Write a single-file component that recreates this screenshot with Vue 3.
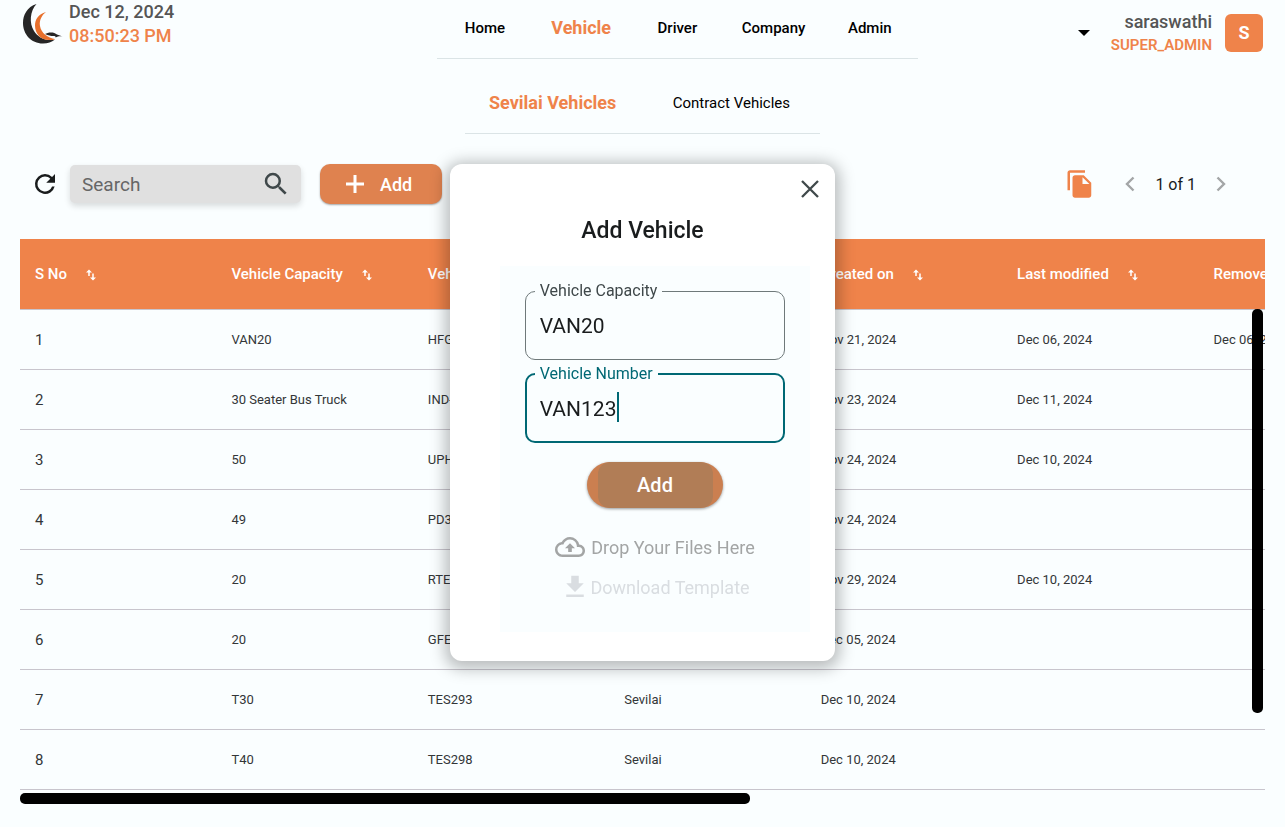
<script setup>
import { ref } from 'vue'

const nav = ['Home', 'Vehicle', 'Driver', 'Company', 'Admin']
const columns = [
  'S No',
  'Vehicle Capacity',
  'Vehicle Number',
  'Company',
  'Created on',
  'Last modified',
  'Removed on',
]
const rows = [
  ['VAN20', 'HFG', '', 'Nov 21, 2024', 'Dec 06, 2024', 'Dec 06, 2024'],
  ['30 Seater Bus Truck', 'IND-', '', 'Nov 23, 2024', 'Dec 11, 2024', ''],
  ['50', 'UPH', '', 'Nov 24, 2024', 'Dec 10, 2024', ''],
  ['49', 'PD3', '', 'Nov 24, 2024', '', ''],
  ['20', 'RTE', '', 'Nov 29, 2024', 'Dec 10, 2024', ''],
  ['20', 'GFE', '', 'Dec 05, 2024', '', ''],
  ['T30', 'TES293', 'Sevilai', 'Dec 10, 2024', '', ''],
  ['T40', 'TES298', 'Sevilai', 'Dec 10, 2024', '', ''],
]
const search = ref('')
const capacity = ref('VAN20')
const number = ref('VAN123')
</script>

<template>
  <div class="page">
    <header class="top">
      <div class="brand">
        <svg class="logo" width="40" height="40" viewBox="0 0 40 40" aria-hidden="true">
          <path d="M13.500 0C4 3 0 11 0 19c0 11 8 20.500 20 20.500 5 0 8.500-1.500 12-4C24 37.500 15 34 11 27 6 19 7 7 13.500 0z" fill="#262626" />
          <path d="M23 8C15 10 12 16 12 21.500 12 30 18 36 26 36c3 0 5 0 6-1C25 34 18 29 17 22c-1-6 2-11 6-14z" fill="#e8702c" />
          <path d="M22 30c3-2 9-2.500 12 .5l5.500 2c-3-.5-4.500 0-7 1 .5-1-.5-1.500-2-1.500-3 0-5-.5-8.500-2z" fill="#262626" />
        </svg>
        <div class="clock">
          <span class="date">Dec 12, 2024</span>
          <span class="time">08:50:23 PM</span>
        </div>
      </div>
      <nav class="nav">
        <a v-for="item in nav" :key="item" href="#" :class="{ active: item === 'Vehicle' }">{{ item }}</a>
      </nav>
      <div class="account">
        <button class="plain" type="button" aria-label="Account menu">
          <svg width="12" height="6" viewBox="0 0 12 6"><path d="M0 0h12L6 6z" fill="#000" /></svg>
        </button>
        <div class="who">
          <span class="name">saraswathi</span>
          <span class="role">SUPER_ADMIN</span>
        </div>
        <span class="avatar">S</span>
      </div>
    </header>

    <nav class="tabs">
      <a href="#" class="active">Sevilai Vehicles</a>
      <a href="#">Contract Vehicles</a>
    </nav>

    <main class="content">
      <div class="toolbar">
        <button class="plain" type="button" aria-label="Refresh">
          <svg width="30" height="30" viewBox="0 0 24 24"><path fill="#191c1d" d="M17.650 6.350A7.960 7.960 0 0 0 12 4a8 8 0 1 0 7.730 10h-2.080A6 6 0 1 1 12 6c1.660 0 3.140.690 4.220 1.780L13 11h7V4z" /></svg>
        </button>
        <div class="search">
          <input v-model="search" type="text" placeholder="Search" aria-label="Search" />
          <svg width="30" height="30" viewBox="0 0 24 24" aria-hidden="true"><path fill="#3f484a" d="M15.500 14h-.790l-.280-.270A6.470 6.470 0 0 0 16 9.500 6.500 6.500 0 1 0 9.500 16c1.610 0 3.090-.590 4.230-1.570l.270.280v.790l5 4.990L20.490 19zm-6 0a4.500 4.500 0 1 1 0-9 4.500 4.500 0 0 1 0 9z" /></svg>
        </div>
        <button class="add" type="button">
          <svg width="18" height="18" viewBox="0 0 18 18" aria-hidden="true"><path d="M9 0v18M0 9h18" stroke="#fff" stroke-width="3" /></svg>
          Add
        </button>
        <div class="pager">
          <button class="plain copy" type="button" aria-label="Copy">
            <svg width="30" height="30" viewBox="0 0 24 24"><path fill="#ef834a" d="M16 1H4c-1.100 0-2 .900-2 2v14h2V3h12zm-1 4l6 6v10c0 1.100-.900 2-2 2H7.990C6.890 23 6 22.100 6 21l.010-14c0-1.100.890-2 1.990-2zm-1 7h5.500L14 6.500z" /></svg>
          </button>
          <button class="plain" type="button" aria-label="Previous page">
            <svg width="10" height="16" viewBox="0 0 10 16"><path d="M8.500 1.500L2 8l6.500 6.500" fill="none" stroke="#a3a6a7" stroke-width="2.400" /></svg>
          </button>
          <span class="count">1 of 1</span>
          <button class="plain" type="button" aria-label="Next page">
            <svg width="10" height="16" viewBox="0 0 10 16"><path d="M1.500 1.500L8 8l-6.500 6.500" fill="none" stroke="#a3a6a7" stroke-width="2.400" /></svg>
          </button>
        </div>
      </div>

      <div class="table-area">
        <div class="viewport">
          <table>
            <thead>
              <tr>
                <th v-for="col in columns" :key="col" scope="col">
                  {{ col }}
                  <svg width="10" height="12" viewBox="0 0 10 12" aria-hidden="true">
                    <path d="M3 7V2M7 4.500V10" stroke="#fff" stroke-width="1.500" fill="none" />
                    <path d="M0 3.500L3 .5l3 3zM4 8.500l3 3 3-3z" fill="#fff" />
                  </svg>
                </th>
              </tr>
            </thead>
            <tbody>
              <tr v-for="(row, i) in rows" :key="i">
                <td class="index">{{ i + 1 }}</td>
                <td v-for="(cell, j) in row" :key="j">{{ cell }}</td>
              </tr>
            </tbody>
          </table>
        </div>
        <div class="bar-y"></div>
        <div class="bar-x"></div>
      </div>
    </main>

    <div class="overlay">
      <form class="dialog" role="dialog" aria-labelledby="dialog-title" @submit.prevent>
        <button class="plain close" type="button" aria-label="Close">
          <svg width="18" height="18" viewBox="0 0 18 18"><path d="M1 1l16 16M17 1L1 17" stroke="#3f484a" stroke-width="2.300" /></svg>
        </button>
        <h2 id="dialog-title">Add Vehicle</h2>
        <div class="panel">
          <fieldset class="field">
            <legend><label for="capacity">Vehicle Capacity</label></legend>
            <input id="capacity" v-model="capacity" type="text" />
          </fieldset>
          <fieldset class="field focused">
            <legend><label for="number">Vehicle Number</label></legend>
            <div class="entry">
              <input id="number" v-model="number" type="text" />
              <span class="caret"></span>
            </div>
          </fieldset>
          <button class="submit" type="submit"><span>Add</span></button>
          <button class="plain file drop" type="button">
            <svg width="30" height="30" viewBox="0 0 24 24" aria-hidden="true"><path fill="#a3a5a5" d="M19.350 10.040A7.490 7.490 0 0 0 12 4C9.110 4 6.600 5.640 5.350 8.040A5.994 5.994 0 0 0 0 14c0 3.310 2.690 6 6 6h13c2.760 0 5-2.240 5-5 0-2.640-2.050-4.780-4.650-4.960zM19 18H6c-2.210 0-4-1.790-4-4s1.790-4 4-4h.710C7.370 7.690 9.480 6 12 6c3.040 0 5.500 2.460 5.500 5.500v.500H19c1.660 0 3 1.340 3 3s-1.340 3-3 3zM8 13h2.550v3h2.900v-3H16l-4-4z" /></svg>
            Drop Your Files Here
          </button>
          <button class="plain file download" type="button" disabled>
            <svg width="30" height="30" viewBox="0 0 24 24" aria-hidden="true"><path fill="#d9dde1" d="M19 9h-4V3H9v6H5l7 7zM5 18v2h14v-2z" /></svg>
            Download Template
          </button>
        </div>
      </form>
    </div>
  </div>
</template>

<style>
body {
  background: #fafdfd;
}
</style>

<style scoped>
.page {
  min-height: 100vh;
  box-sizing: border-box;
  overflow: hidden;
  font-family: Roboto, "Liberation Sans", sans-serif;
  color: #191c1d;
  background: #fafeff;
}
button,
input {
  font-family: inherit;
  color: inherit;
}
a {
  color: #000;
  text-decoration: none;
}
svg {
  display: block;
  flex: none;
}
.plain {
  display: flex;
  align-items: center;
  padding: 0;
  border: 0;
  background: none;
}
.top {
  display: grid;
  grid-template-columns: 34% 481px 1fr;
  height: 59px;
}
.brand {
  display: flex;
  gap: 6px;
  padding-left: 23px;
}
.logo {
  margin-top: 4px;
}
.clock {
  display: flex;
  flex-direction: column;
  font-size: 18px;
  line-height: 24px;
  font-weight: 500;
}
.date,
.name {
  color: #555;
}
.time,
.role {
  color: #ef834a;
}
.nav {
  display: grid;
  grid-template-columns: repeat(5, 1fr);
  align-items: center;
  justify-items: center;
  padding-bottom: 3px;
  border-bottom: 1px solid #dbe4e6;
  font-size: 15px;
  font-weight: 500;
}
.nav .active,
.tabs .active {
  color: #ef834a;
  font-size: 18px;
  font-weight: 700;
}
.account {
  display: flex;
  justify-content: flex-end;
  align-items: center;
  gap: 13px;
  padding: 0 22px 0 0;
  margin-bottom: -6px;
}
.account .plain {
  margin-right: 8px;
}
.who {
  display: flex;
  flex-direction: column;
  align-items: flex-end;
  font-weight: 500;
}
.name {
  font-size: 18px;
  line-height: 24px;
}
.role {
  font-size: 15px;
  font-weight: 600;
  line-height: 22px;
}
.avatar {
  display: grid;
  place-items: center;
  width: 38px;
  height: 38px;
  border-radius: 6px;
  background: #ef834a;
  color: #fff;
  font-size: 18px;
  font-weight: 700;
}
.tabs {
  display: flex;
  justify-content: space-between;
  align-items: center;
  width: 355px;
  height: 75px;
  box-sizing: border-box;
  margin: 0 auto;
  padding: 13px 30px 0 24px;
  border-bottom: 1px solid #dbe4e6;
  font-size: 15px;
}
.content {
  padding: 30px 20px 0;
}
.toolbar {
  display: flex;
  align-items: center;
  height: 40px;
  margin-bottom: 35px;
  padding-left: 10px;
}
.search {
  display: flex;
  align-items: center;
  width: 231px;
  height: 38px;
  margin: 0 19px 0 10px;
  padding: 0 10px 0 12px;
  box-sizing: border-box;
  border-radius: 5px;
  background: #e0e0e0;
  box-shadow: 0 3px 6px rgba(0, 0, 0, 0.14);
}
.search input {
  flex: 1;
  min-width: 0;
  padding: 0;
  border: 0;
  outline: 0;
  background: none;
  font-size: 19px;
}
.search input::placeholder {
  color: #666;
}
.add {
  display: flex;
  align-items: center;
  gap: 16px;
  width: 122px;
  height: 40px;
  padding: 0 0 0 26px;
  border: 0;
  border-radius: 10px;
  background: #df824f;
  box-shadow: 0 1px 2px rgba(0, 0, 0, 0.35);
  color: #fff;
  font-size: 18px;
  font-weight: 500;
}
.pager {
  display: flex;
  align-items: center;
  gap: 20px;
  margin-left: auto;
  padding-right: 39px;
}
.copy {
  margin-right: 10px;
}
.count {
  font-size: 16px;
}
.table-area {
  position: relative;
  padding-bottom: 14px;
}
.viewport {
  overflow: hidden;
}
table {
  width: 100%;
  min-width: 1375px;
  table-layout: fixed;
  border-collapse: separate;
  border-spacing: 0;
}
th,
td {
  box-sizing: border-box;
  padding: 0 0 0 15px;
  border-bottom: 1px solid #c8c5cd;
  text-align: left;
  white-space: nowrap;
}
th {
  height: 71px;
  background: #ef834a;
  background-clip: padding-box;
  color: #fff;
  font-size: 15px;
  font-weight: 500;
}
th svg {
  display: inline-block;
  margin-left: 15px;
  vertical-align: -2px;
}
td {
  height: 60px;
  font-size: 13px;
  color: #333638;
}
td.index {
  font-size: 15px;
}
.bar-y {
  position: absolute;
  top: 70px;
  right: 2px;
  width: 11px;
  height: 404px;
  border-radius: 5px;
  background: #000;
}
.bar-x {
  position: absolute;
  left: 0;
  bottom: 0;
  width: 730px;
  height: 11px;
  border-radius: 5px;
  background: #000;
}
.overlay {
  position: fixed;
  inset: 0;
  display: flex;
  align-items: center;
  justify-content: center;
  padding-bottom: 2px;
}
.dialog {
  display: flex;
  flex-direction: column;
  width: 30%;
  min-width: 385px;
  min-height: 497px;
  box-sizing: border-box;
  padding: 16px 25px 29px 50px;
  border-radius: 12px;
  background: #fff;
  box-shadow: 0 3px 15px 5px rgba(0, 0, 0, 0.26);
}
.close {
  align-self: flex-end;
  margin-right: -9px;
}
h2 {
  margin: 18px 25px 20px 0;
  text-align: center;
  font-size: 23px;
  line-height: 30px;
  font-weight: 500;
}
.panel {
  flex: 1;
  display: flex;
  flex-direction: column;
  align-items: center;
  padding: 15px 25px 0;
  background: #fafeff;
}
.field {
  width: 100%;
  height: 79px;
  box-sizing: border-box;
  margin: 0 0 4px;
  padding: 0 9px;
  border: 1px solid #6f797a;
  border-radius: 10px;
}
.field legend {
  padding: 0 5px;
  font-size: 16px;
  line-height: 20px;
  color: #3f484a;
}
.field input {
  display: block;
  width: 100%;
  height: 30px;
  box-sizing: border-box;
  margin: 0;
  padding: 0 5px;
  border: 0;
  outline: 0;
  background: none;
  font-size: 21px;
}
.field > input,
.entry {
  margin-top: 10px;
}
.field.focused {
  padding: 0 8px;
  border: 2px solid #006874;
}
.field.focused legend {
  color: #006874;
}
.entry {
  position: relative;
}
.caret {
  position: absolute;
  left: 82px;
  top: -2px;
  width: 2px;
  height: 30px;
  background: #006874;
}
.submit {
  display: flex;
  justify-content: center;
  width: 136px;
  height: 46px;
  margin: 15px 0 24px;
  padding: 0;
  overflow: hidden;
  border: 0;
  border-radius: 23px;
  background: #cb7f50;
  box-shadow: 0 1px 3px rgba(0, 0, 0, 0.4);
  color: #fff;
  font-size: 20px;
  font-weight: 500;
}
.submit span {
  width: 115px;
  border-radius: 12px;
  background: #b17d56;
  line-height: 46px;
}
.file {
  gap: 6px;
  height: 30px;
  font-size: 18px;
}
.drop {
  margin-bottom: 10px;
  color: #a3a5a5;
}
.download {
  gap: 0;
  color: #d9dde1;
}
</style>
